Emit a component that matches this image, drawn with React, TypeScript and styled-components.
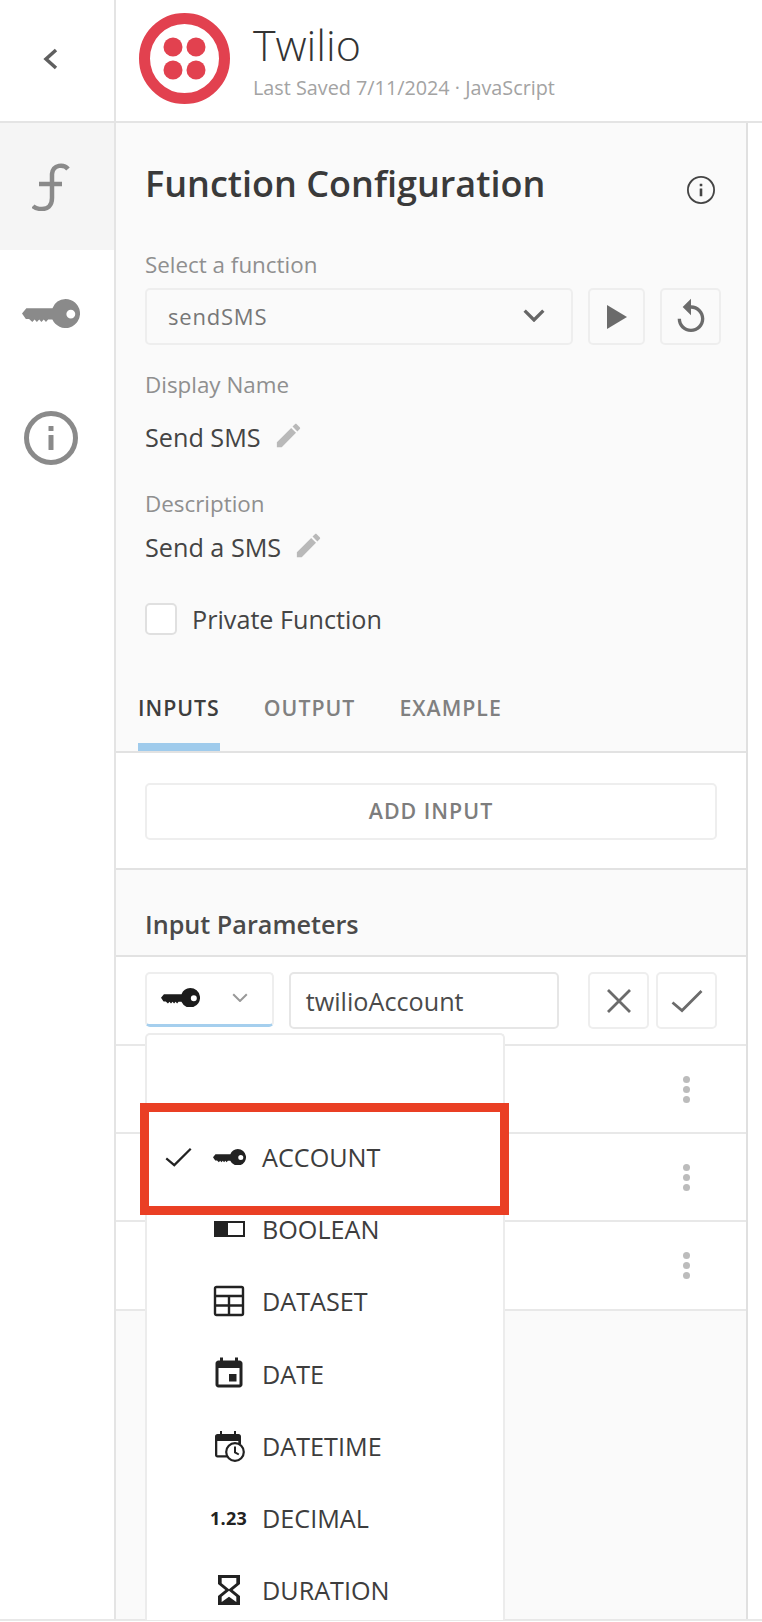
import React from "react";
import styled, { createGlobalStyle } from "styled-components";

const Global = createGlobalStyle`
  html, body { margin: 0; padding: 0; background: #fff; }
  body { font-family: "Open Sans", "Liberation Sans", sans-serif; color: #3c3c3c; overflow: hidden; }
  * { box-sizing: border-box; }
`;

const Page = styled.div`
  position: relative;
  width: 762px;
  height: 1622px;
  overflow: hidden;
  background: #fff;
`;
const Header = styled.header`
  display: flex;
  height: 123px;
  border-bottom: 2px solid #e4e4e4;
`;
const BackCell = styled.div`
  width: 116px;
  flex: none;
  display: flex;
  align-items: center;
  justify-content: center;
  padding-right: 14px;
  padding-bottom: 4px;
  border-right: 2px solid #e4e4e4;
  color: #5f5f5f;
`;
const Logo = styled.svg`
  width: 91px;
  height: 91px;
  flex: none;
  margin: 13px 0 0 23px;
`;
const TitleBlock = styled.div`
  margin-left: 23px;
  padding-top: 16px;
`;
const Title = styled.h1`
  margin: 0;
  font-size: 43px;
  line-height: 58px;
  font-weight: 300;
  color: #333;
`;
const Saved = styled.div`
  font-size: 19.8px;
  line-height: 24px;
  margin-top: 2px;
  color: #a3a3a3;
`;
const Body = styled.div`
  display: flex;
  height: 1498px;
  border-bottom: 2px solid #e8e8e8;
`;
const Side = styled.nav`
  width: 116px;
  flex: none;
  border-right: 2px solid #e4e4e4;
`;
const SideTab = styled.div<{ $active?: boolean; $h: number }>`
  height: ${(p) => p.$h}px;
  display: flex;
  align-items: center;
  justify-content: center;
  padding-right: 12px;
  color: #8a8a8a;
  background: ${(p) => (p.$active ? "#f5f5f5" : "#fff")};
`;
const Panel = styled.main`
  width: 632px;
  flex: none;
  background: #fafafa;
  border-right: 2px solid #e0e0e0;
  display: flex;
  flex-direction: column;
`;
const Form = styled.div`
  padding: 37px 25px 0 29px;
`;
const HeadingRow = styled.div`
  display: flex;
  justify-content: space-between;
  align-items: center;
  height: 48px;
`;
const Heading = styled.h2`
  margin: 0;
  font-size: 36px;
  line-height: 48px;
  font-weight: 600;
  color: #3a3a3a;
`;
const HeadInfo = styled.span`
  display: flex;
  color: #444;
  margin-right: 6px;
  margin-top: 12px;
`;
const Label = styled.div<{ $mt: number }>`
  margin-top: ${(p) => p.$mt}px;
  font-size: 22.4px;
  line-height: 24px;
  color: #8f8f8f;
`;
const SelectRow = styled.div`
  display: flex;
  margin-top: 11px;
  height: 57px;
`;
const FunctionSelect = styled.div`
  width: 428px;
  display: flex;
  align-items: center;
  justify-content: space-between;
  padding: 0 26px 2px 21px;
  border: 2px solid #eeeeee;
  border-radius: 5px;
  font-size: 22px;
  font-weight: 500;
  letter-spacing: 0.8px;
  color: #777;
`;
const IconButton = styled.button<{ $w: number; $ml: number }>`
  width: ${(p) => p.$w}px;
  margin-left: ${(p) => p.$ml}px;
  height: 100%;
  display: flex;
  align-items: center;
  justify-content: center;
  padding: 0;
  background: transparent;
  border: 2px solid #eeeeee;
  border-radius: 5px;
  color: #6b6b6b;
`;
const EditText = styled.div<{ $mt: number }>`
  display: flex;
  align-items: center;
  gap: 12px;
  margin-top: ${(p) => p.$mt}px;
  font-size: 25.2px;
  line-height: 30px;
  color: #444;
  svg {
    margin-top: -4px;
  }
`;
const CheckRow = styled.label`
  display: flex;
  align-items: center;
  margin-top: 41px;
  height: 32px;
  font-size: 25.2px;
  color: #444;
`;
const CheckBox = styled.span`
  width: 32px;
  height: 32px;
  margin-right: 15px;
  background: #fff;
  border: 2px solid #e0e0e0;
  border-radius: 5px;
`;
const Tabs = styled.div`
  display: flex;
  height: 118px;
  align-items: flex-end;
  padding-left: 22px;
  gap: 44px;
  border-bottom: 2px solid #e2e2e2;
`;
const TabItem = styled.div<{ $active?: boolean }>`
  height: 63px;
  line-height: 40px;
  font-size: 21.3px;
  font-weight: 600;
  letter-spacing: 1px;
  color: ${(p) => (p.$active ? "#3d3d3d" : "#808080")};
  border-bottom: 8px solid ${(p) => (p.$active ? "#9fcbec" : "transparent")};
`;
const AddSection = styled.div`
  height: 117px;
  padding: 30px 29px 0 29px;
  background: #fff;
  border-bottom: 2px solid #e2e2e2;
`;
const AddButton = styled.button`
  display: block;
  width: 100%;
  height: 57px;
  padding: 0 0 3px;
  background: #fff;
  border: 2px solid #eeeeee;
  border-radius: 5px;
  font-family: inherit;
  font-size: 21.4px;
  font-weight: 600;
  letter-spacing: 1px;
  color: #7d7d7d;
`;
const ParamsHead = styled.div`
  height: 87px;
  padding: 38px 0 0 29px;
  font-size: 25.2px;
  line-height: 32px;
  font-weight: 600;
  color: #4a4a4a;
  border-bottom: 2px solid #e2e2e2;
`;
const EditRow = styled.div`
  display: flex;
  height: 89px;
  padding: 15px 29px 0 29px;
  background: #fff;
  border-bottom: 2px solid #e8e8e8;
`;
const TypeSelect = styled.div`
  width: 129px;
  height: 55px;
  display: flex;
  align-items: center;
  justify-content: space-between;
  padding: 0 24px 3px 14px;
  border: 2px solid #eeeeee;
  border-bottom: 3px solid #a5cfee;
  border-radius: 5px;
  color: #1c1c1c;
`;
const NameInput = styled.div`
  width: 271px;
  height: 57px;
  margin-left: 15px;
  padding-left: 15px;
  line-height: 55px;
  border: 2px solid #e6e6e6;
  border-radius: 5px;
  font-size: 25.2px;
  color: #4a4a4a;
`;
const EditButtons = styled.div`
  display: flex;
  height: 57px;
  margin-left: 29px;
`;
const ParamRow = styled.div<{ $h: number }>`
  height: ${(p) => p.$h}px;
  display: flex;
  align-items: center;
  justify-content: flex-end;
  padding-right: 56px;
  background: #fff;
  border-bottom: 2px solid #e8e8e8;
`;
const Kebab = styled.div`
  display: flex;
  flex-direction: column;
  gap: 3px;
  span {
    display: block;
    width: 7px;
    height: 7px;
    border-radius: 50%;
    background: #bcbcbc;
  }
`;
const Menu = styled.div`
  position: absolute;
  left: 145px;
  top: 1033px;
  width: 360px;
  height: 587px;
  padding-top: 86px;
  background: #fff;
  border: 2px solid #ececec;
  border-bottom: none;
  border-radius: 5px 5px 0 0;
`;
const MenuItem = styled.div`
  display: flex;
  align-items: center;
  height: 72.2px;
  font-size: 25.2px;
  color: #3d3d3d;
`;
const CheckSlot = styled.span`
  width: 66px;
  flex: none;
  padding-left: 18px;
  display: flex;
  color: #222;
`;
const MenuIcon = styled.span`
  width: 49px;
  height: 32px;
  flex: none;
  display: flex;
  align-items: center;
  color: #222;
`;
const NumberIcon = styled.span`
  font-size: 18px;
  font-weight: 700;
  letter-spacing: 0.3px;
  color: #222;
  margin-left: -3px;
`;
const Highlight = styled.div`
  position: absolute;
  left: 140px;
  top: 1103px;
  width: 369px;
  height: 112px;
  border: 9px solid #ea3f24;
`;

const KeyIcon = ({ w, color = "currentColor" }: { w: number; color?: string }) => (
  <svg width={w} height={w / 2} viewBox="0 0 60 30" fill={color}>
    <path fillRule="evenodd" d="M45 0a15 15 0 1 1-13.6 21.3H27l-2.2 2.6-2.3-2.6-2.4 2.6-2.3-2.6-2.4 2.6-2.4-2.6-2.3 2.6-3.4-3.2H4L0 15l4.5-5.5h27A15 15 0 0 1 45 0Zm5.5 11a4.6 4.6 0 1 0 0 9.200a4.600 4.600 0 0 0 0-9.200Z" />
  </svg>
);
const Chevron = ({ size, sw, color = "currentColor" }: { size: number; sw: number; color?: string }) => (
  <svg width={size} height={size * 0.6} viewBox="0 0 20 12" fill="none" stroke={color} strokeWidth={sw}>
    <path d="M1.500 1.500 10 10l8.500-8.500" />
  </svg>
);
const Pencil = () => (
  <svg width="31" height="31" viewBox="0 0 24 24" fill="#b9b9b9">
    <path d="M3 17.250V21h3.750L17.810 9.940l-3.750-3.750L3 17.250zM20.710 7.040c.39-.39.39-1.020 0-1.410l-2.340-2.340c-.39-.39-1.020-.39-1.410 0l-1.830 1.830 3.750 3.750 1.830-1.830z" />
  </svg>
);
const Info = ({ size, sw, inner }: { size: number; sw: number; inner: number }) => (
  <svg width={size} height={size} viewBox="0 0 54 54" fill="none">
    <circle cx="27" cy="27" r={27 - sw / 2} stroke="currentColor" strokeWidth={sw} />
    <rect x={27 - inner / 2} y="24" width={inner} height="15" rx="0.500" fill="currentColor" />
    <rect x={27 - inner / 2} y="15" width={inner} height={inner} rx="0.500" fill="currentColor" />
  </svg>
);
const Check = ({ w, sw, color = "currentColor" }: { w: number; sw: number; color?: string }) => (
  <svg width={w} height={w * 0.75} viewBox="0 0 32 24" fill="none" stroke={color} strokeWidth={sw}>
    <path d="M1.500 13.500 11 21.500 30.500 2" />
  </svg>
);
const Toggle = () => (
  <svg width="32" height="32" viewBox="0 0 32 32">
    <rect x="2" y="9" width="29" height="14" fill="none" stroke="currentColor" strokeWidth="2" />
    <rect x="2" y="9" width="13" height="14" fill="currentColor" />
  </svg>
);
const Table = () => (
  <svg width="32" height="32" viewBox="0 0 32 32" fill="none" stroke="currentColor" strokeWidth="2.400">
    <rect x="2" y="2" width="28" height="28" rx="1.500" />
    <path d="M2 11h28M2 20.500h28M16 11v19" />
  </svg>
);
const Event = () => (
  <svg width="36" height="36" viewBox="0 0 24 24" fill="currentColor" style={{ marginLeft: -2 }}>
    <path d="M17 12h-5v5h5v-5zM16 1v2H8V1H6v2H5c-1.110 0-1.990.9-1.990 2L3 19c0 1.100.89 2 2 2h14c1.100 0 2-.9 2-2V5c0-1.100-.9-2-2-2h-1V1h-2zm3 18H5V8h14v11z" />
  </svg>
);
const EventClock = () => (
  <svg width="32" height="32" viewBox="0 0 32 32">
    <path fill="currentColor" d="M21 1v3H9V1H7v3H4.500C3 4 2 5 2 6.500V25c0 1.500 1 2.500 2.500 2.500H15v-2.300H4.300V11h21v3H28V6.500C28 5 27 4 25.500 4H23V1h-2z" />
    <circle cx="22" cy="22" r="8.800" fill="#fff" stroke="currentColor" strokeWidth="2.200" />
    <path d="M22 16.500v5.800l3.800 2.200" fill="none" stroke="currentColor" strokeWidth="2" />
  </svg>
);
const Hourglass = () => (
  <svg width="32" height="30" viewBox="0 2 24 20" preserveAspectRatio="none" fill="currentColor">
    <g transform="translate(12 12) scale(1.375 1) translate(-12 -12)">
      <path d="M6 2v6h.01L6 8.010 10 12l-4 4 .01.01H6V22h12v-5.990h-.01L18 16l-4-4 4-3.990-.01-.01H18V2H6zm10 14.500V20H8v-3.500l4-4 4 4zm-4-5l-4-4V4h8v3.500l-4 4z" />
      <path d="M8 20l4-3.500 4 3.500z" />
    </g>
  </svg>
);

const items: { label: string; icon: React.ReactNode; checked?: boolean }[] = [
  { label: "ACCOUNT", icon: <KeyIcon w={33} />, checked: true },
  { label: "BOOLEAN", icon: <Toggle /> },
  { label: "DATASET", icon: <Table /> },
  { label: "DATE", icon: <Event /> },
  { label: "DATETIME", icon: <EventClock /> },
  { label: "DECIMAL", icon: <NumberIcon>1.23</NumberIcon> },
  { label: "DURATION", icon: <Hourglass /> },
];

const KebabDots = () => (
  <Kebab>
    <span />
    <span />
    <span />
  </Kebab>
);

export default function App() {
  return (
    <Page>
      <Global />
      <Header>
        <BackCell>
          <svg width="17" height="24" viewBox="0 0 17 24" fill="none" stroke="currentColor" strokeWidth="3.500">
            <path d="M14 3 4 12l10 9" />
          </svg>
        </BackCell>
        <Logo viewBox="0 0 91 91">
          <circle cx="45.500" cy="45.500" r="40" fill="#fff" stroke="#e2414f" strokeWidth="11" />
          <circle cx="34" cy="34" r="9.500" fill="#e2414f" />
          <circle cx="57" cy="34" r="9.500" fill="#e2414f" />
          <circle cx="34" cy="57" r="9.500" fill="#e2414f" />
          <circle cx="57" cy="57" r="9.500" fill="#e2414f" />
        </Logo>
        <TitleBlock>
          <Title>Twilio</Title>
          <Saved>Last Saved 7/11/2024 · JavaScript</Saved>
        </TitleBlock>
      </Header>
      <Body>
        <Side>
          <SideTab $active $h={127}>
            <svg width="38" height="48" viewBox="0 0 38 48" fill="none" stroke="currentColor" strokeWidth="4.500">
              <path d="M36 6C32 1 21 1 20 11V35C20 43 15 46 10 46 6 46 3 45 1 43" />
              <path d="M7 21h23" />
            </svg>
          </SideTab>
          <SideTab $h={127}>
            <KeyIcon w={58} />
          </SideTab>
          <SideTab $h={122}>
            <Info size={54} sw={5} inner={5} />
          </SideTab>
        </Side>
        <Panel>
          <Form>
            <HeadingRow>
              <Heading>Function Configuration</Heading>
              <HeadInfo>
                <Info size={28} sw={3.500} inner={5} />
              </HeadInfo>
            </HeadingRow>
            <Label $mt={45}>Select a function</Label>
            <SelectRow>
              <FunctionSelect>
                sendSMS
                <Chevron size={22} sw={3} color="#666" />
              </FunctionSelect>
              <IconButton $w={57} $ml={15}>
                <svg width="22" height="26" viewBox="0 0 22 26" fill="currentColor">
                  <path d="M1 1l20 12L1 25z" />
                </svg>
              </IconButton>
              <IconButton $w={61} $ml={15}>
                <svg width="40" height="40" viewBox="0 0 24 24" fill="currentColor">
                  <path d="M12 5V1L7 6l5 5V7c3.310 0 6 2.690 6 6s-2.690 6-6 6-6-2.690-6-6H4c0 4.420 3.580 8 8 8s8-3.580 8-8-3.580-8-8-8z" />
                </svg>
              </IconButton>
            </SelectRow>
            <Label $mt={28}>Display Name</Label>
            <EditText $mt={25}>
              Send SMS
              <Pencil />
            </EditText>
            <Label $mt={40}>Description</Label>
            <EditText $mt={16}>
              Send a SMS
              <Pencil />
            </EditText>
            <CheckRow>
              <CheckBox />
              Private Function
            </CheckRow>
          </Form>
          <Tabs>
            <TabItem $active>INPUTS</TabItem>
            <TabItem>OUTPUT</TabItem>
            <TabItem>EXAMPLE</TabItem>
          </Tabs>
          <AddSection>
            <AddButton>ADD INPUT</AddButton>
          </AddSection>
          <ParamsHead>Input Parameters</ParamsHead>
          <EditRow>
            <TypeSelect>
              <KeyIcon w={39} />
              <Chevron size={16} sw={2.500} color="#999" />
            </TypeSelect>
            <NameInput>twilioAccount</NameInput>
            <EditButtons>
              <IconButton $w={61} $ml={0}>
                <svg width="26" height="26" viewBox="0 0 26 26" fill="none" stroke="currentColor" strokeWidth="2.800">
                  <path d="M2 2l22 22M24 2 2 24" />
                </svg>
              </IconButton>
              <IconButton $w={61} $ml={7}>
                <Check w={32} sw={2.800} />
              </IconButton>
            </EditButtons>
          </EditRow>
          <ParamRow $h={88}><KebabDots /></ParamRow>
          <ParamRow $h={88}><KebabDots /></ParamRow>
          <ParamRow $h={89}><KebabDots /></ParamRow>
        </Panel>
      </Body>
      <Menu>
        {items.map((it) => (
          <MenuItem key={it.label}>
            <CheckSlot>{it.checked && <Check w={27} sw={2.600} />}</CheckSlot>
            <MenuIcon>{it.icon}</MenuIcon>
            {it.label}
          </MenuItem>
        ))}
      </Menu>
      <Highlight />
    </Page>
  );
}
